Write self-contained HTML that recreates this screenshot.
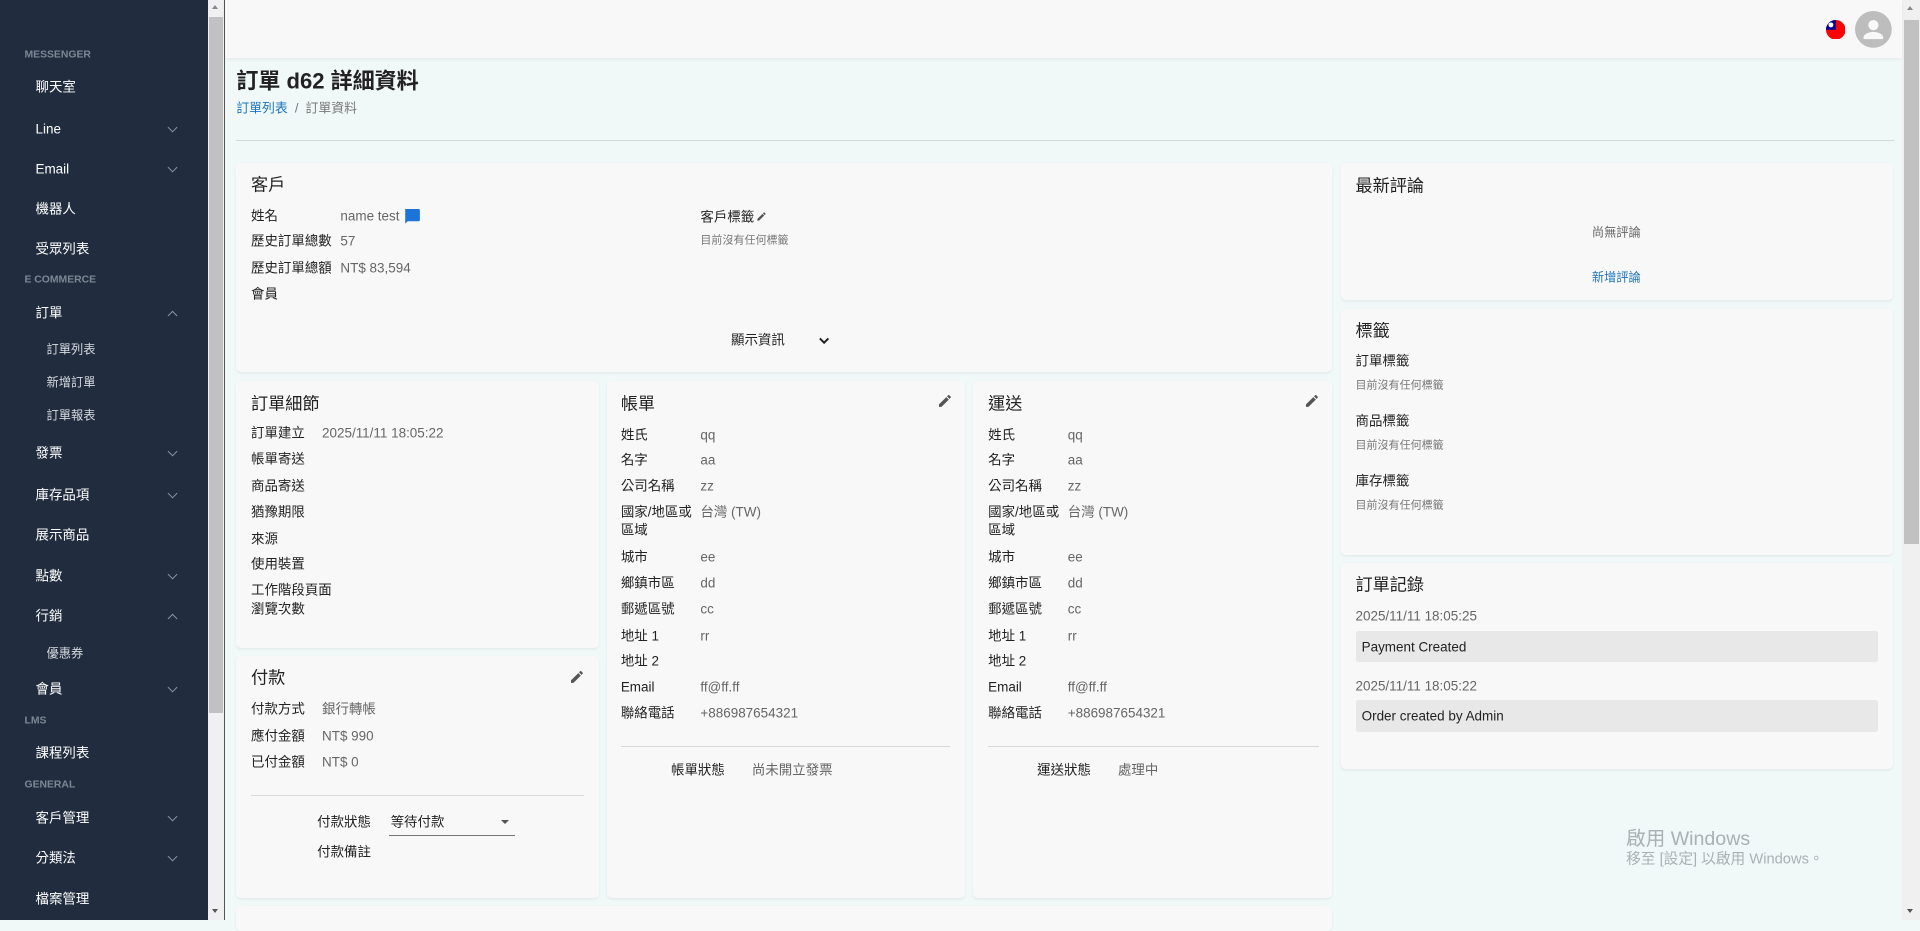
<!DOCTYPE html>
<html><head><meta charset="utf-8">
<style>
html,body{margin:0;padding:0;}
body{width:1568px;height:751px;zoom:1.22449;overflow:hidden;position:relative;background:#f1f8f8;font-family:"Liberation Sans","Noto Sans CJK TC",sans-serif;color:#222;}
.a{position:absolute;}
.t{position:absolute;transform:translateY(-50%);white-space:nowrap;font-size:11px;line-height:14px;}
#sb{left:0;top:0;width:170px;height:751px;background:#212d3f;}
#sb .h{color:#7d8794;font-size:8.5px;font-weight:bold;left:20px;}
#sb .i{color:#fff;font-size:11px;left:29px;}
#sb .s{color:#d6dae0;font-size:10px;left:38px;}
.chev{position:absolute;width:5px;height:5px;border-right:1px solid #8a94a0;border-bottom:1px solid #8a94a0;transform:rotate(45deg);left:138px;}
.chev.up{transform:rotate(-135deg);}
.card{position:absolute;background:#f8f8f8;border-radius:4px;box-shadow:0 1px 2px rgba(0,0,0,.06);}
.ti{font-size:14px;}
.lb{color:#222;}
.v{color:#666;}
.g{color:#777;font-size:9px;}
.div{position:absolute;height:1px;background:#d8d8d8;}
</style></head><body>
<div id="sb" class="a">
<div class="t h" style="top:45px">MESSENGER</div>
<div class="t i" style="top:71px">聊天室</div>
<div class="t i" style="top:105px">Line</div><div class="chev" style="top:101px"></div>
<div class="t i" style="top:138px">Email</div><div class="chev" style="top:134px"></div>
<div class="t i" style="top:171px">機器人</div>
<div class="t i" style="top:203px">受眾列表</div>
<div class="t h" style="top:229px">E COMMERCE</div>
<div class="t i" style="top:256px">訂單</div><div class="chev up" style="top:255px"></div>
<div class="t s" style="top:286px">訂單列表</div>
<div class="t s" style="top:313px">新增訂單</div>
<div class="t s" style="top:340px">訂單報表</div>
<div class="t i" style="top:370px">發票</div><div class="chev" style="top:366px"></div>
<div class="t i" style="top:404px">庫存品項</div><div class="chev" style="top:400px"></div>
<div class="t i" style="top:437px">展示商品</div>
<div class="t i" style="top:470px">點數</div><div class="chev" style="top:466px"></div>
<div class="t i" style="top:503px">行銷</div><div class="chev up" style="top:502px"></div>
<div class="t s" style="top:534px">優惠券</div>
<div class="t i" style="top:563px">會員</div><div class="chev" style="top:559px"></div>
<div class="t h" style="top:589px">LMS</div>
<div class="t i" style="top:615px">課程列表</div>
<div class="t h" style="top:641px">GENERAL</div>
<div class="t i" style="top:668px">客戶管理</div><div class="chev" style="top:664px"></div>
<div class="t i" style="top:701px">分類法</div><div class="chev" style="top:697px"></div>
<div class="t i" style="top:734px">檔案管理</div>
</div>
<!-- left scrollbar -->
<div class="a" style="left:170px;top:0;width:13px;height:751px;background:#f0f0f0"></div>
<div class="a" style="left:171px;top:14px;width:11px;height:568px;background:#c1c1c1"></div>
<div class="a" style="left:173px;top:4px;width:0;height:0;border:3px solid transparent;border-bottom:4px solid #888;border-top:0"></div>
<div class="a" style="left:173px;top:742px;width:0;height:0;border:3px solid transparent;border-top:4px solid #555;border-bottom:0"></div>
<div class="a" style="left:183px;top:0;width:1px;height:751px;background:#555"></div>
<!-- right scrollbar -->
<div class="a" style="left:1553px;top:0;width:15px;height:751px;background:#f0f0f0"></div>
<div class="a" style="left:1555px;top:16px;width:12px;height:428px;background:#c1c1c1"></div>
<div class="a" style="left:1557px;top:5px;width:0;height:0;border:3px solid transparent;border-bottom:4px solid #888;border-top:0"></div>
<div class="a" style="left:1557px;top:742px;width:0;height:0;border:3px solid transparent;border-top:4px solid #555;border-bottom:0"></div>
<!-- header -->
<div class="a" style="left:184px;top:0;width:1369px;height:47px;background:#f8f8f8;box-shadow:0 2px 3px rgba(0,0,0,.05)"></div>
<svg class="a" style="left:1491px;top:16px" width="16" height="16" viewBox="0 0 16 16"><clipPath id="c"><circle cx="8" cy="8" r="8"/></clipPath><g clip-path="url(#c)"><rect width="16" height="16" fill="#fe0000"/><rect width="8" height="8" fill="#000095"/><circle cx="4" cy="4" r="2" fill="#fff"/></g></svg>
<svg class="a" style="left:1515px;top:9px" width="30" height="30" viewBox="0 0 30 30"><circle cx="15" cy="15" r="15" fill="#bdbdbd"/><circle cx="15" cy="11.5" r="4.2" fill="#f8f8f8"/><path d="M7 21.5c0-3 5.3-4.5 8-4.5s8 1.5 8 4.5V23H7z" fill="#f8f8f8"/></svg>
<!-- title -->
<div class="t" style="left:193px;top:67px;font-size:18px;line-height:22px;font-weight:bold;color:#222">訂單 d62 詳細資料</div>
<div class="t" style="left:193px;top:88px;font-size:10.5px"><span style="color:#1e73be">訂單列表</span><span style="color:#777">&nbsp; / &nbsp;訂單資料</span></div>
<div class="div" style="left:193px;top:114px;width:1354px;background:#d4d8d8"></div>

<!-- customer -->
<div class="card" style="left:193px;top:133px;width:895px;height:171px"></div>
<div class="t ti" style="left:205px;top:151px">客戶</div>
<div class="t lb" style="left:205px;top:176px">姓名</div><div class="t v" style="left:278px;top:176px">name test</div>
<svg class="a" style="left:330px;top:171px" width="13" height="12" viewBox="0 0 13 12"><path d="M1 0h11a1 1 0 0 1 1 1v8a1 1 0 0 1-1 1H3l-2 2V1a1 1 0 0 1 0-1z" fill="#1e73d8"/></svg>
<div class="t lb" style="left:205px;top:197px">歷史訂單總數</div><div class="t v" style="left:278px;top:197px">57</div>
<div class="t lb" style="left:205px;top:219px">歷史訂單總額</div><div class="t v" style="left:278px;top:219px">NT$ 83,594</div>
<div class="t lb" style="left:205px;top:240px">會員</div>
<div class="t lb" style="left:572px;top:177px">客戶標籤</div>
<svg class="a" style="left:617px;top:172px" width="9" height="9" viewBox="0 0 24 24"><path d="M3 17.25V21h3.75L17.81 9.94l-3.75-3.75zM20.71 7.04a1 1 0 0 0 0-1.41l-2.34-2.34a1 1 0 0 0-1.41 0l-1.83 1.83 3.75 3.75z" fill="#555"/></svg>
<div class="t g" style="left:572px;top:197px">目前沒有任何標籤</div>
<div class="t" style="left:597px;top:278px">顯示資訊</div>
<svg class="a" style="left:668px;top:274px" width="10" height="8" viewBox="0 0 10 8"><path d="M1.5 2l3.5 3.5L8.5 2" stroke="#222" stroke-width="1.6" fill="none"/></svg>

<!-- comments -->
<div class="card" style="left:1095px;top:133px;width:451px;height:112px"></div>
<div class="t ti" style="left:1107px;top:152px">最新評論</div>
<div class="t v" style="left:1300px;top:190px;font-size:10px">尚無評論</div>
<div class="t" style="left:1300px;top:227px;font-size:10px;color:#1e73be">新增評論</div>

<!-- tags -->
<div class="card" style="left:1095px;top:252px;width:451px;height:201px"></div>
<div class="t ti" style="left:1107px;top:270px">標籤</div>
<div class="t lb" style="left:1107px;top:295px">訂單標籤</div><div class="t g" style="left:1107px;top:315px">目前沒有任何標籤</div>
<div class="t lb" style="left:1107px;top:344px">商品標籤</div><div class="t g" style="left:1107px;top:364px">目前沒有任何標籤</div>
<div class="t lb" style="left:1107px;top:393px">庫存標籤</div><div class="t g" style="left:1107px;top:413px">目前沒有任何標籤</div>

<!-- records -->
<div class="card" style="left:1095px;top:460px;width:451px;height:168px"></div>
<div class="t ti" style="left:1107px;top:478px">訂單記錄</div>
<div class="t v" style="left:1107px;top:503px">2025/11/11 18:05:25</div>
<div class="a" style="left:1107px;top:515px;width:427px;height:26px;background:#e8e8e8;border-radius:2px"></div>
<div class="t" style="left:1112px;top:528px">Payment Created</div>
<div class="t v" style="left:1107px;top:560px">2025/11/11 18:05:22</div>
<div class="a" style="left:1107px;top:572px;width:427px;height:26px;background:#e8e8e8;border-radius:2px"></div>
<div class="t" style="left:1112px;top:585px">Order created by Admin</div>

<!-- order details -->
<div class="card" style="left:193px;top:311px;width:296px;height:218px"></div>
<div class="t ti" style="left:205px;top:330px">訂單細節</div>
<div class="t lb" style="left:205px;top:354px">訂單建立</div><div class="t v" style="left:263px;top:354px">2025/11/11 18:05:22</div>
<div class="t lb" style="left:205px;top:375px">帳單寄送</div>
<div class="t lb" style="left:205px;top:397px">商品寄送</div>
<div class="t lb" style="left:205px;top:418px">猶豫期限</div>
<div class="t lb" style="left:205px;top:440px">來源</div>
<div class="t lb" style="left:205px;top:461px">使用裝置</div>
<div class="t lb" style="left:205px;top:482px">工作階段頁面</div>
<div class="t lb" style="left:205px;top:497px">瀏覽次數</div>

<!-- payment -->
<div class="card" style="left:193px;top:536px;width:296px;height:197px"></div>
<div class="t ti" style="left:205px;top:554px">付款</div>
<svg class="a" style="left:465px;top:546px" width="13" height="13" viewBox="0 0 24 24"><path d="M3 17.25V21h3.75L17.81 9.94l-3.75-3.75zM20.71 7.04a1 1 0 0 0 0-1.41l-2.34-2.34a1 1 0 0 0-1.41 0l-1.83 1.83 3.75 3.75z" fill="#555"/></svg>
<div class="t lb" style="left:205px;top:579px">付款方式</div><div class="t v" style="left:263px;top:579px">銀行轉帳</div>
<div class="t lb" style="left:205px;top:601px">應付金額</div><div class="t v" style="left:263px;top:601px">NT$ 990</div>
<div class="t lb" style="left:205px;top:622px">已付金額</div><div class="t v" style="left:263px;top:622px">NT$ 0</div>
<div class="div" style="left:205px;top:649px;width:272px"></div>
<div class="t lb" style="left:259px;top:671px">付款狀態</div>
<div class="t lb" style="left:319px;top:671px">等待付款</div>
<div class="a" style="left:409px;top:670px;width:0;height:0;border:4px solid transparent;border-top:4px solid #555;border-bottom:0"></div>
<div class="a" style="left:318px;top:682px;width:103px;height:1px;background:#777"></div>
<div class="t lb" style="left:259px;top:696px">付款備註</div>

<!-- bill -->
<div class="card" style="left:496px;top:311px;width:292px;height:422px"></div>
<div class="t ti" style="left:507px;top:330px">帳單</div>
<svg class="a" style="left:765px;top:321px" width="13" height="13" viewBox="0 0 24 24"><path d="M3 17.25V21h3.75L17.81 9.94l-3.75-3.75zM20.71 7.04a1 1 0 0 0 0-1.41l-2.34-2.34a1 1 0 0 0-1.41 0l-1.83 1.83 3.75 3.75z" fill="#555"/></svg>
<div class="t lb" style="left:507px;top:355px">姓氏</div><div class="t v" style="left:572px;top:355px">qq</div>
<div class="t lb" style="left:507px;top:376px">名字</div><div class="t v" style="left:572px;top:376px">aa</div>
<div class="t lb" style="left:507px;top:397px">公司名稱</div><div class="t v" style="left:572px;top:397px">zz</div>
<div class="t lb" style="left:507px;top:418px">國家/地區或</div><div class="t v" style="left:572px;top:418px">台灣 (TW)</div>
<div class="t lb" style="left:507px;top:433px">區域</div>
<div class="t lb" style="left:507px;top:455px">城市</div><div class="t v" style="left:572px;top:455px">ee</div>
<div class="t lb" style="left:507px;top:476px">鄉鎮市區</div><div class="t v" style="left:572px;top:476px">dd</div>
<div class="t lb" style="left:507px;top:497px">郵遞區號</div><div class="t v" style="left:572px;top:497px">cc</div>
<div class="t lb" style="left:507px;top:519px">地址 1</div><div class="t v" style="left:572px;top:519px">rr</div>
<div class="t lb" style="left:507px;top:540px">地址 2</div>
<div class="t lb" style="left:507px;top:561px">Email</div><div class="t v" style="left:572px;top:561px">ff@ff.ff</div>
<div class="t lb" style="left:507px;top:582px">聯絡電話</div><div class="t v" style="left:572px;top:582px">+886987654321</div>
<div class="div" style="left:507px;top:609px;width:269px"></div>
<div class="t lb" style="left:548px;top:629px">帳單狀態</div><div class="t v" style="left:614px;top:629px">尚未開立發票</div>

<!-- shipping -->
<div class="card" style="left:795px;top:311px;width:293px;height:422px"></div>
<div class="t ti" style="left:807px;top:330px">運送</div>
<svg class="a" style="left:1065px;top:321px" width="13" height="13" viewBox="0 0 24 24"><path d="M3 17.25V21h3.75L17.81 9.94l-3.75-3.75zM20.71 7.04a1 1 0 0 0 0-1.41l-2.34-2.34a1 1 0 0 0-1.41 0l-1.83 1.83 3.75 3.75z" fill="#555"/></svg>
<div class="t lb" style="left:807px;top:355px">姓氏</div><div class="t v" style="left:872px;top:355px">qq</div>
<div class="t lb" style="left:807px;top:376px">名字</div><div class="t v" style="left:872px;top:376px">aa</div>
<div class="t lb" style="left:807px;top:397px">公司名稱</div><div class="t v" style="left:872px;top:397px">zz</div>
<div class="t lb" style="left:807px;top:418px">國家/地區或</div><div class="t v" style="left:872px;top:418px">台灣 (TW)</div>
<div class="t lb" style="left:807px;top:433px">區域</div>
<div class="t lb" style="left:807px;top:455px">城市</div><div class="t v" style="left:872px;top:455px">ee</div>
<div class="t lb" style="left:807px;top:476px">鄉鎮市區</div><div class="t v" style="left:872px;top:476px">dd</div>
<div class="t lb" style="left:807px;top:497px">郵遞區號</div><div class="t v" style="left:872px;top:497px">cc</div>
<div class="t lb" style="left:807px;top:519px">地址 1</div><div class="t v" style="left:872px;top:519px">rr</div>
<div class="t lb" style="left:807px;top:540px">地址 2</div>
<div class="t lb" style="left:807px;top:561px">Email</div><div class="t v" style="left:872px;top:561px">ff@ff.ff</div>
<div class="t lb" style="left:807px;top:582px">聯絡電話</div><div class="t v" style="left:872px;top:582px">+886987654321</div>
<div class="div" style="left:807px;top:609px;width:270px"></div>
<div class="t lb" style="left:847px;top:629px">運送狀態</div><div class="t v" style="left:913px;top:629px">處理中</div>

<!-- bottom card -->
<div class="card" style="left:193px;top:740px;width:895px;height:20px"></div>

<!-- watermark -->
<div class="t" style="left:1328px;top:685px;font-size:16px;line-height:18px;color:#aab0b3">啟用 Windows</div>
<div class="t" style="left:1328px;top:702px;font-size:12px;color:#aab0b3">移至 [設定] 以啟用 Windows。</div>
</body></html>
